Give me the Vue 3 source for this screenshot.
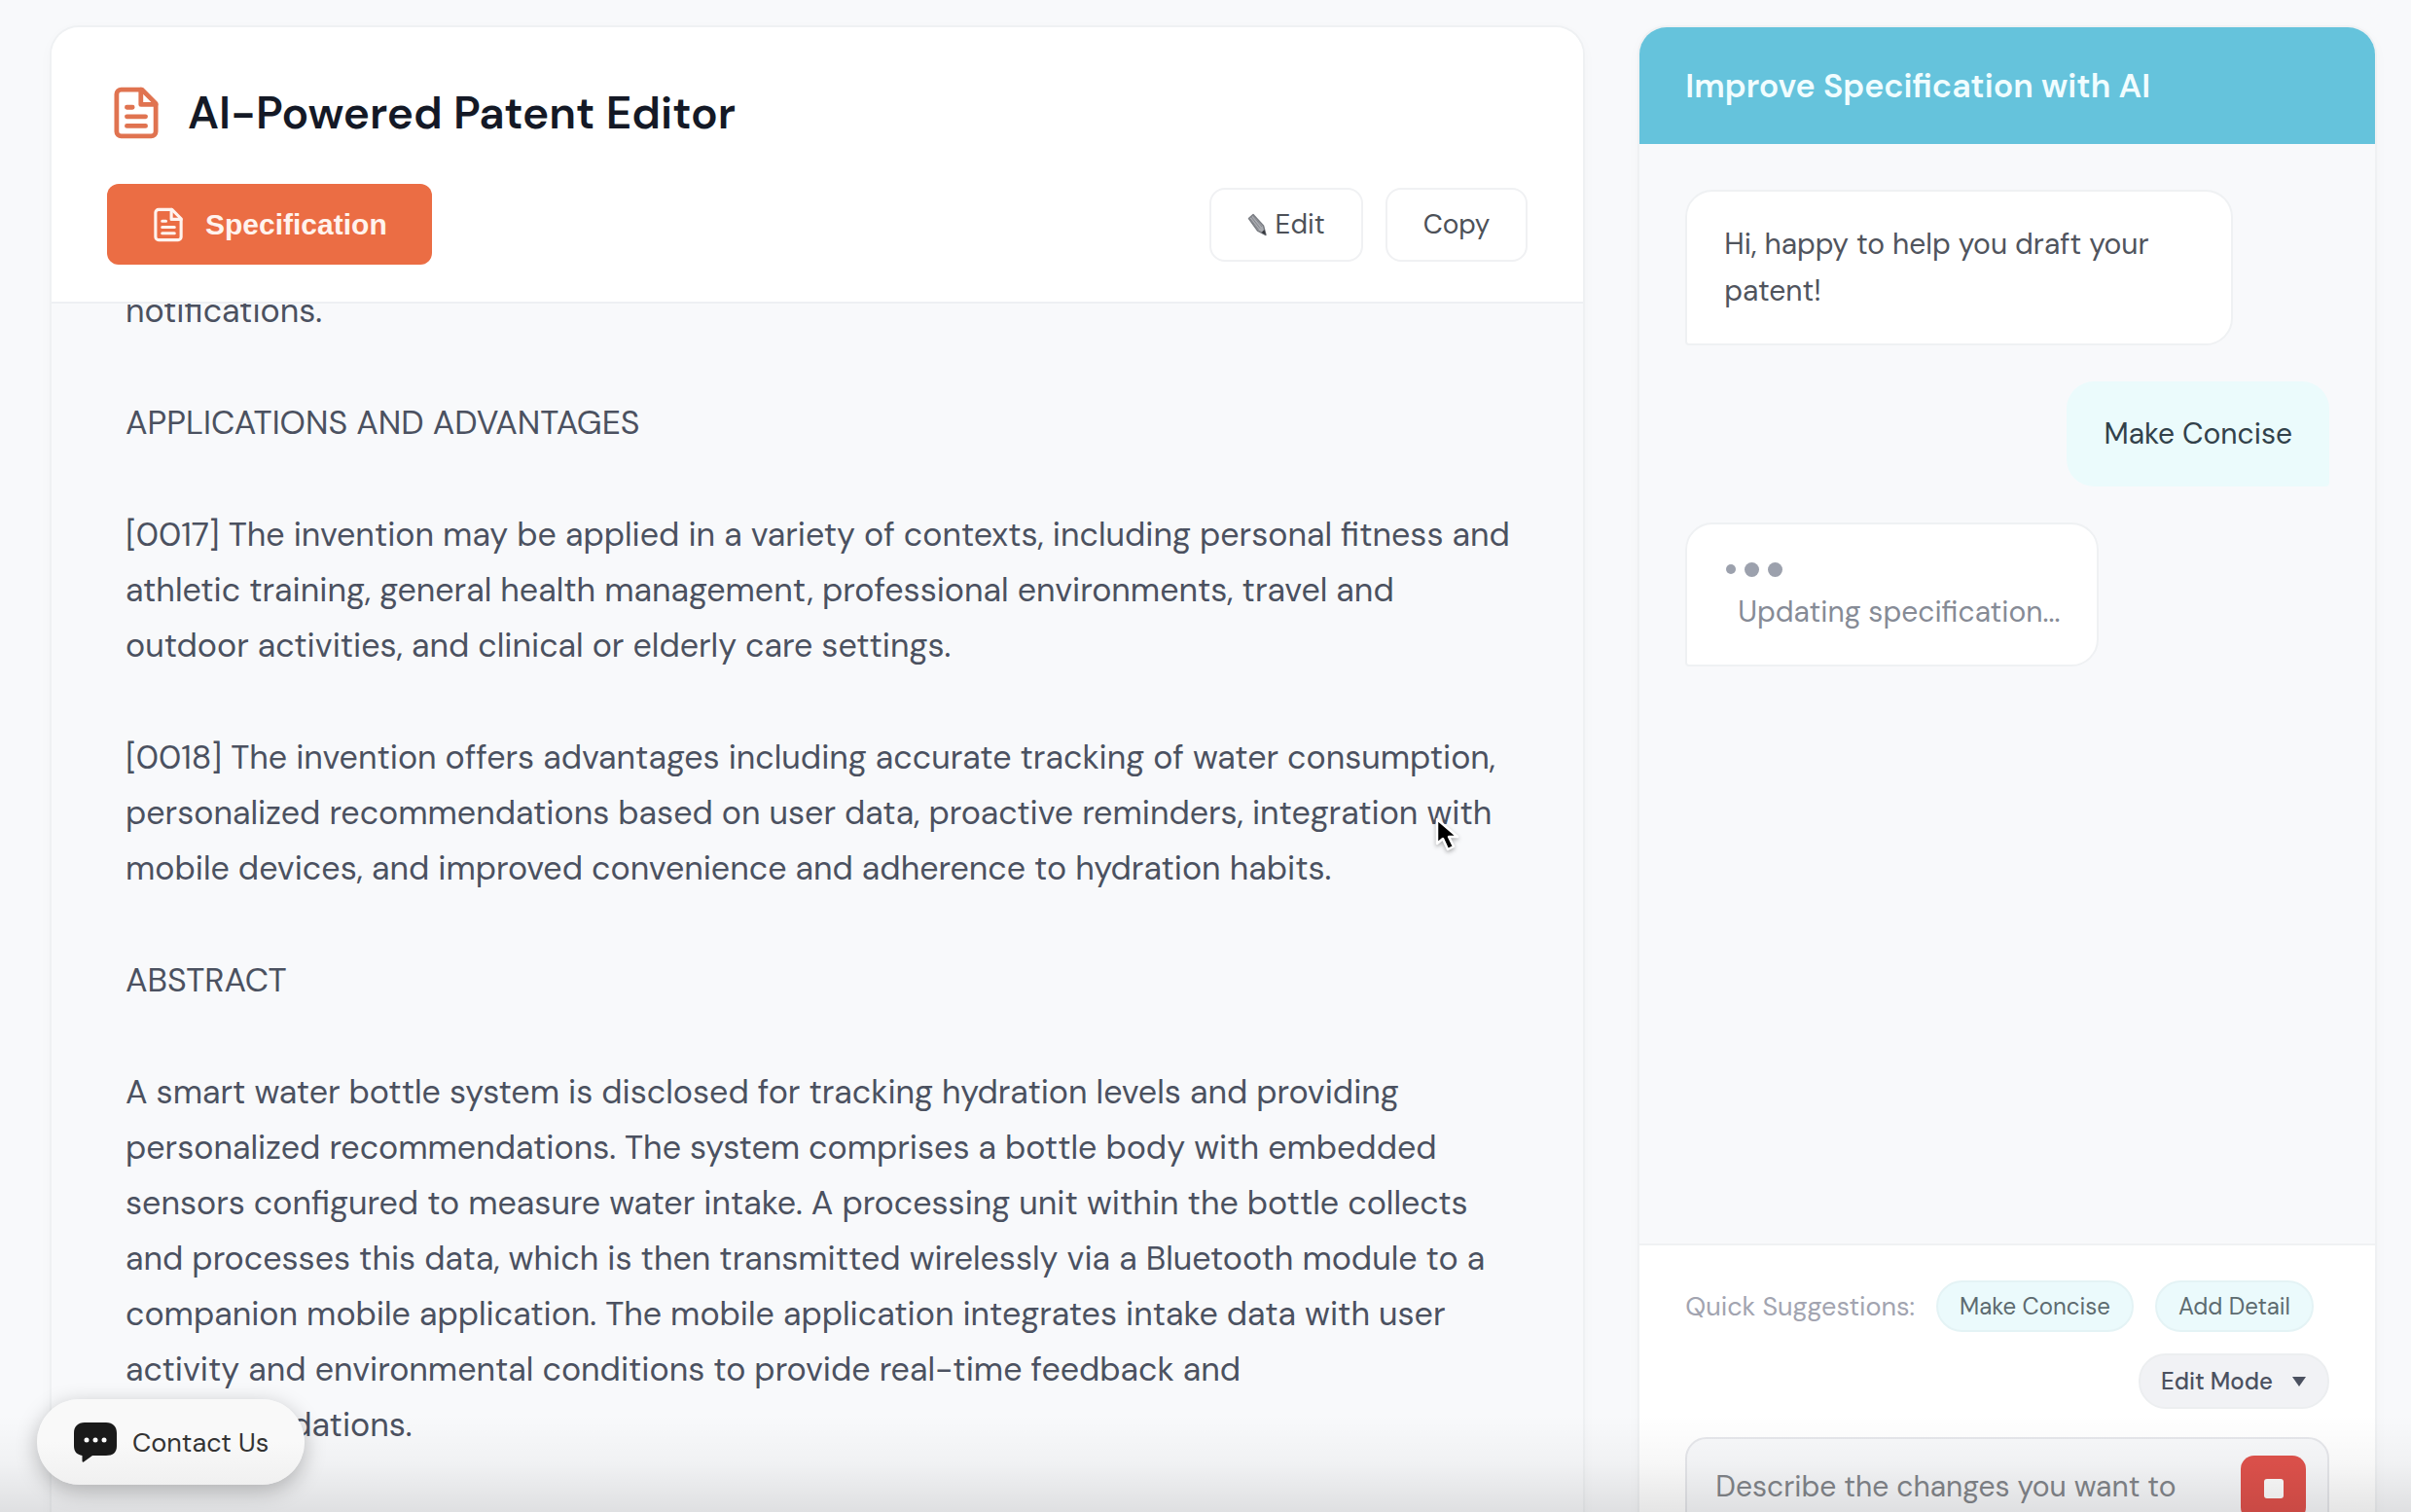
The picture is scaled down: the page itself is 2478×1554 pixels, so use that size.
<template>
  <div class="page">
    <main class="workspace">
      <section class="editor">
        <header class="editor__header">
          <div class="editor__title">
            <svg class="icon-doc icon-doc--large" viewBox="0 0 24 28" fill="none" stroke-width="2.5" aria-hidden="true">
              <path d="M4 1.500h11L22.500 9v15a2.500 2.500 0 0 1-2.500 2.500H4A2.500 2.500 0 0 1 1.500 24V4A2.500 2.500 0 0 1 4 1.500z" />
              <path d="M14.500 1.500V9.500h8M7 11h3M7 16h10M7 21h10" />
            </svg>
            <h1>AI-Powered Patent Editor</h1>
          </div>
          <div class="toolbar">
            <button type="button" class="tab">
              <svg class="icon-doc" viewBox="0 0 24 28" fill="none" stroke-width="2.5" aria-hidden="true">
                <path d="M4 1.500h11L22.500 9v15a2.500 2.500 0 0 1-2.500 2.500H4A2.500 2.500 0 0 1 1.500 24V4A2.500 2.500 0 0 1 4 1.500z" />
                <path d="M14.500 1.500V9.500h8M7 11h3M7 16h10M7 21h10" />
              </svg>
              <span>Specification</span>
            </button>
            <div class="toolbar__actions">
              <button type="button" class="action">
                <svg class="icon-pencil" viewBox="0 0 20 24" aria-hidden="true">
                  <path d="M1.500 5.500 6 1.500 16.500 13 19 22.500 10.500 18z" fill="#a9abb0" stroke="#7b7e84" stroke-width="1.500" stroke-linejoin="round" />
                  <path d="M4 4 13 15.500M3 6l8.500 11M6 3l9 11" stroke="#85878d" stroke-width="1" />
                  <path d="m14.500 20 3-3 1.500 5.500z" fill="#33363c" />
                </svg>
                <span>Edit</span>
              </button>
              <button type="button" class="action">Copy</button>
            </div>
          </div>
        </header>

        <article class="document">
          <div class="document__text">
            <p v-for="(paragraph, i) in paragraphs" :key="i">{{ paragraph }}</p>
          </div>
        </article>
      </section>

      <aside class="chat">
        <header class="chat__header">
          <h2>Improve Specification with AI</h2>
        </header>

        <div class="chat__messages">
          <div class="message message--bot">Hi, happy to help you draft your patent!</div>
          <div class="message message--user">Make Concise</div>
          <div class="message message--bot message--pending">
            <div class="dots">
              <span class="dot dot--small"></span>
              <span class="dot"></span>
              <span class="dot"></span>
            </div>
            <span class="message__status">Updating specification...</span>
          </div>
        </div>

        <footer class="chat__footer">
          <div class="suggestions">
            <span class="suggestions__label">Quick Suggestions:</span>
            <button
              v-for="item in suggestions"
              :key="item"
              type="button"
              class="pill"
              @click="prompt = item"
            >
              {{ item }}
            </button>
          </div>

          <div class="mode">
            <select v-model="mode" class="mode__select" aria-label="Mode">
              <option value="edit">Edit Mode</option>
            </select>
            <svg class="mode__arrow" viewBox="0 0 16 12" aria-hidden="true">
              <path d="M1 1h14L8 11z" fill="#4b5160" />
            </svg>
          </div>

          <div class="prompt">
            <textarea
              v-model="prompt"
              rows="3"
              placeholder="Describe the changes you want to"
              aria-label="Prompt"
            ></textarea>
            <button type="button" class="stop" aria-label="Stop">
              <span class="stop__square"></span>
            </button>
          </div>
        </footer>
      </aside>
    </main>

    <div class="bottom-shade"></div>

    <button type="button" class="contact">
      <svg class="contact__icon" viewBox="0 0 46 42" aria-hidden="true">
        <path d="M12 1h22c7 0 11 4 11 11v13c0 7-4 10-11 10H20l-9 6.500c-1 .5-1.500 0-1.500-1V35C4 34 1 31 1 25V12C1 5 5 1 12 1z" fill="#1a1a1a" />
        <circle cx="14" cy="19" r="2.500" fill="#fff" />
        <circle cx="23" cy="19" r="2.500" fill="#fff" />
        <circle cx="32" cy="19" r="2.500" fill="#fff" />
      </svg>
      <span>Contact Us</span>
    </button>

    <svg class="cursor" viewBox="0 0 26 36" aria-hidden="true">
      <path
        d="M2 2v25l6-5 5 11 6-3-5-10h9z"
        fill="#000"
        stroke="#fff"
        stroke-width="2.500"
        stroke-linejoin="round"
      />
    </svg>
  </div>
</template>

<script setup>
import { ref } from "vue";

const mode = ref("edit");
const prompt = ref("");

const suggestions = ["Make Concise", "Add Detail"];

const paragraphs = [
  "notifications.",
  "APPLICATIONS AND ADVANTAGES",
  `[0017] The invention may be applied in a variety of contexts, including personal fitness and
athletic training, general health management, professional environments, travel and
outdoor activities, and clinical or elderly care settings.`,
  `[0018] The invention offers advantages including accurate tracking of water consumption,
personalized recommendations based on user data, proactive reminders, integration with
mobile devices, and improved convenience and adherence to hydration habits.`,
  "ABSTRACT",
  `A smart water bottle system is disclosed for tracking hydration levels and providing
personalized recommendations. The system comprises a bottle body with embedded
sensors configured to measure water intake. A processing unit within the bottle collects
and processes this data, which is then transmitted wirelessly via a Bluetooth module to a
companion mobile application. The mobile application integrates intake data with user
activity and environmental conditions to provide real-time feedback and
recommendations.`,
];
</script>

<style>
body {
  margin: 0;
  background: #f8f9fb;
}
</style>

<style scoped>
.page {
  position: relative;
  height: 100vh;
  overflow: hidden;
  background: #f8f9fb;
  font-family: "DM Sans", Inter, sans-serif;
  color: #4b5160;
}

.page *,
.page *::before {
  box-sizing: border-box;
}

button,
select,
textarea {
  font-family: inherit;
}

button {
  cursor: pointer;
}

/* the panels run past the bottom edge of the window */
.workspace {
  display: grid;
  grid-template-columns: 25fr 12fr;
  gap: 58px;
  height: calc(100% + 153px);
  padding: 28px 37px 0 53px;
}

.editor,
.chat {
  display: flex;
  flex-direction: column;
  min-width: 0;
  min-height: 0;
  overflow: hidden;
  border-radius: 28px;
  box-shadow: 0 0 0 2px #eff1f3, 0 4px 16px rgba(0, 0, 0, 0.03);
}

.editor__header {
  padding: 58px 57px 38px;
  background: #fff;
  border-bottom: 2px solid #eef0f3;
}

.editor__title {
  display: flex;
  align-items: center;
  gap: 30px;
  height: 60px;
  padding-left: 7px;
}

.editor__title h1 {
  margin: 0;
  font-size: 46px;
  font-weight: 600;
  line-height: 60px;
  color: #141926;
  white-space: nowrap;
}

.icon-doc {
  width: 30px;
  height: 36px;
  stroke: currentColor;
  stroke-linecap: round;
  stroke-linejoin: round;
}

.icon-doc--large {
  width: 46px;
  height: 56px;
  color: #e07350;
}

.toolbar {
  display: flex;
  align-items: center;
  justify-content: space-between;
  margin-top: 43px;
}

.tab {
  display: flex;
  align-items: center;
  gap: 23px;
  height: 83px;
  padding: 0 46px 0 48px;
  border: 0;
  border-radius: 12px;
  background: #eb6d44;
  color: #fff3ee;
  font-family: "Liberation Sans", Arial, sans-serif;
  font-size: 30px;
  font-weight: 700;
}

.toolbar__actions {
  display: flex;
  gap: 23px;
}

.action {
  display: flex;
  align-items: center;
  gap: 9px;
  height: 76px;
  padding: 0 37px;
  border: 2px solid #f0f1f3;
  border-radius: 16px;
  background: #fff;
  color: #4d5158;
  font-size: 28px;
}

.icon-pencil {
  width: 20px;
  height: 24px;
}

.document {
  flex: 1;
  min-height: 0;
  overflow: hidden;
  padding: 0 76px;
}

.document__text {
  margin-top: -21px;
}

.document p {
  margin: 0 0 58px;
  font-size: 34px;
  line-height: 57px;
  white-space: pre;
}

.chat__header {
  display: flex;
  align-items: center;
  height: 120px;
  padding: 0 47px;
  background: #65c3dc;
}

.chat__header h2 {
  margin: 0;
  font-size: 34px;
  font-weight: 600;
  color: #f1fdff;
  white-space: nowrap;
}

.chat__messages {
  display: flex;
  flex: 1;
  flex-direction: column;
  gap: 37px;
  min-height: 0;
  padding: 47px 47px 0;
}

.message {
  max-width: 85%;
  padding: 30px 38px;
  border-radius: 28px;
  font-size: 30px;
  line-height: 48px;
}

.message--bot {
  align-self: flex-start;
  border: 2px solid #eff1f3;
  border-bottom-left-radius: 4px;
  background: #fff;
  color: #50545d;
}

.message--user {
  align-self: flex-end;
  border-bottom-right-radius: 4px;
  background: #ebfbfc;
  color: #32414a;
}

.message--pending {
  display: flex;
  flex-direction: column;
  gap: 4px;
}

.dots {
  display: flex;
  align-items: center;
  gap: 9px;
  height: 32px;
}

.dot {
  width: 15px;
  height: 15px;
  border-radius: 50%;
  background: #9ca1ad;
}

.dot--small {
  width: 10px;
  height: 10px;
  margin-left: 2px;
}

.message__status {
  padding-left: 14px;
  color: #868b96;
}

.chat__footer {
  padding: 36px 47px 40px;
  border-top: 2px solid #f0f1f3;
  background: #fff;
}

.suggestions {
  display: flex;
  align-items: center;
  gap: 22px;
}

.suggestions__label {
  font-size: 27px;
  color: #a2a4b0;
  white-space: nowrap;
}

.pill {
  height: 53px;
  padding: 0 22px;
  border: 2px solid #e4f3f5;
  border-radius: 27px;
  background: #ebfafc;
  color: #5d6b70;
  font-size: 24px;
  white-space: nowrap;
}

.mode {
  position: relative;
  width: max-content;
  margin: 22px 0 29px auto;
}

.mode__select {
  height: 57px;
  padding: 0 56px 0 21px;
  border: 2px solid #eceef0;
  border-radius: 28px;
  background: #f1f2f5;
  color: #4b5160;
  font-size: 24px;
  font-weight: 500;
  appearance: none;
}

.mode__arrow {
  position: absolute;
  top: 23px;
  right: 23px;
  width: 16px;
  height: 12px;
  pointer-events: none;
}

.prompt {
  display: flex;
  align-items: flex-start;
  gap: 20px;
  padding: 17px 22px 17px 29px;
  border: 2px solid #e6e7eb;
  border-radius: 22px;
  background: #f8f9fb;
}

.prompt textarea {
  flex: 1;
  min-width: 0;
  padding: 10px 0;
  border: 0;
  outline: 0;
  resize: none;
  background: transparent;
  color: #4b5160;
  font-size: 30px;
  line-height: 44px;
}

.prompt textarea::placeholder {
  color: #83868b;
  opacity: 1;
}

.stop {
  display: flex;
  align-items: center;
  justify-content: center;
  width: 67px;
  height: 67px;
  padding: 0;
  border: 0;
  border-radius: 14px;
  background: #e0524c;
}

.stop__square {
  width: 20px;
  height: 20px;
  border-radius: 3px;
  background: #fff;
}

.bottom-shade {
  position: absolute;
  right: 0;
  bottom: 0;
  left: 0;
  height: 100px;
  background: linear-gradient(rgba(0, 0, 0, 0), rgba(0, 0, 0, 0.03) 50%, rgba(0, 0, 0, 0.1));
  pointer-events: none;
}

.contact {
  position: absolute;
  bottom: 28px;
  left: 38px;
  display: flex;
  align-items: center;
  gap: 15px;
  height: 88px;
  padding: 0 37px;
  border: 0;
  border-radius: 44px;
  background: linear-gradient(#f9f9f9 50%, #f0f0f0);
  box-shadow: 0 6px 22px rgba(0, 0, 0, 0.26);
  color: #333;
  font-size: 27px;
  white-space: nowrap;
}

.contact__icon {
  width: 46px;
  height: 42px;
}

.cursor {
  position: absolute;
  top: 840px;
  left: 1475px;
  width: 26px;
  height: 36px;
  filter: drop-shadow(0 2px 2px rgba(0, 0, 0, 0.3));
}
</style>
